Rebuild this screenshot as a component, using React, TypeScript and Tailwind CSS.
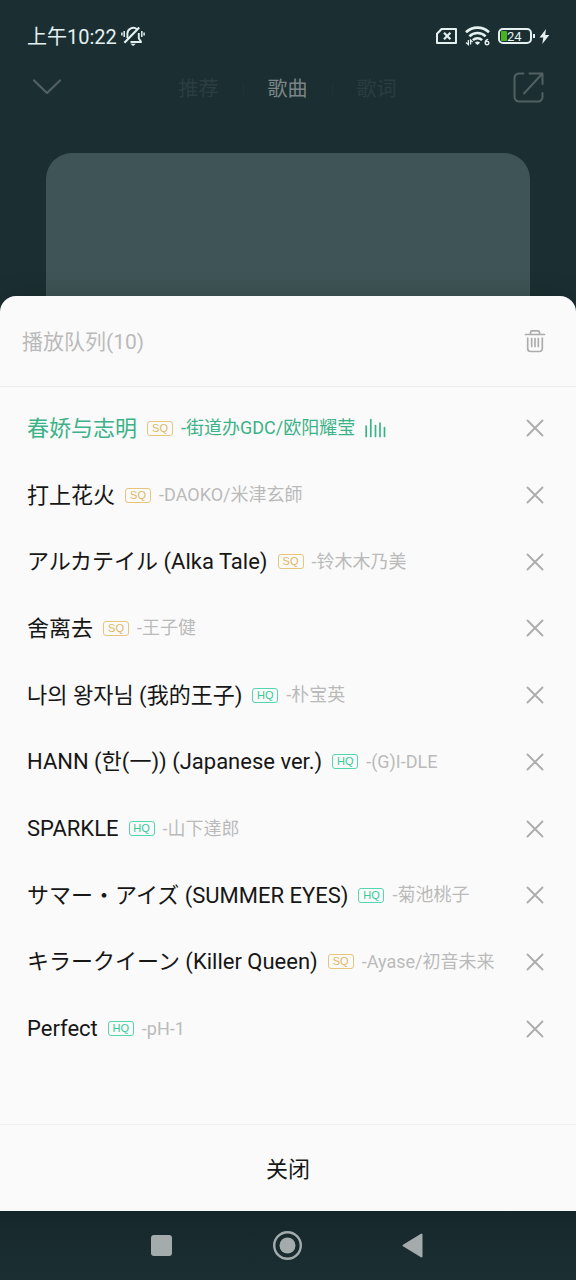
type Quality = "SQ" | "HQ";

type Track = { title: string; artist: string; quality: Quality; playing?: boolean };

const tracks: Track[] = [
  { title: "春娇与志明", artist: "街道办GDC/欧阳耀莹", quality: "SQ", playing: true },
  { title: "打上花火", artist: "DAOKO/米津玄師", quality: "SQ" },
  { title: "アルカテイル (Alka Tale)", artist: "铃木木乃美", quality: "SQ" },
  { title: "舍离去", artist: "王子健", quality: "SQ" },
  { title: "나의 왕자님 (我的王子)", artist: "朴宝英", quality: "HQ" },
  { title: "HANN (한(一)) (Japanese ver.)", artist: "(G)I-DLE", quality: "HQ" },
  { title: "SPARKLE", artist: "山下達郎", quality: "HQ" },
  { title: "サマー・アイズ (SUMMER EYES)", artist: "菊池桃子", quality: "HQ" },
  { title: "キラークイーン (Killer Queen)", artist: "Ayase/初音未来", quality: "SQ" },
  { title: "Perfect", artist: "pH-1", quality: "HQ" },
];

function MutedBell() {
  return (
    <svg width="24" height="22" viewBox="0 0 24 22" fill="none" stroke="currentColor" strokeWidth="1.9" aria-label="静音">
      <path d="M6.400 13V8.500a5.900 5.900 0 0 1 9.600-4.300" />
      <path d="M17.800 8v5.500l2 2.700V17H9.500" />
      <path d="M3.400 17.800 18.200 2.600" strokeWidth="2.200" />
      <path d="M9.300 18.800h5.600L12.100 21z" fill="currentColor" stroke="none" />
      <path d="M3.200 6v6M.9 7.500v3M20.800 6v6M23.100 7.500v3" strokeWidth="1.500" />
    </svg>
  );
}

function SimMissing() {
  return (
    <svg width="21" height="16" viewBox="0 0 21 16" fill="none" stroke="currentColor" aria-label="无SIM卡">
      <path d="M5.600 1H20v14H1V5.800z" strokeWidth="2" strokeLinejoin="round" />
      <path d="m8 4.800 6.400 6.400m0-6.400L8 11.200" strokeWidth="2.200" />
    </svg>
  );
}

function Wifi() {
  return (
    <svg width="25" height="20" viewBox="0 0 25 20" fill="none" stroke="currentColor" aria-label="Wi-Fi 6">
      <path d="M1 6.300a16.500 16.500 0 0 1 23 0" strokeWidth="2.600" />
      <path d="M4.400 10.400a11.500 11.500 0 0 1 16.200 0" strokeWidth="2.600" />
      <path d="M7.900 14.200a6.500 6.500 0 0 1 9.200 0" strokeWidth="2.600" />
      <path d="m9.800 16.700 2.700 2.300 2.700-2.300a4 4 0 0 0-5.400 0z" fill="currentColor" stroke="none" />
      <path d="M3.400 14v4.500L1 16.400M5.600 18.500V14l2 2.100" strokeWidth="1.300" />
      <path d="M23.200 13.400c-2 .3-3 1.600-3 3.300 0 1.300.7 2 1.900 2s1.800-.7 1.800-1.700-.7-1.600-1.700-1.600-1.600.5-1.900 1.100" strokeWidth="1.400" />
    </svg>
  );
}

function Battery() {
  return (
    <div className="flex items-center" role="img" aria-label="电量 24%">
      <div className="flex h-4 w-[34px] items-center rounded-[5px] border-2 border-[#e4f1f0] px-px">
        <span className="h-[10px] w-1.5 shrink-0 rounded-[1px] bg-[#49b41c]" />
        <span className="pt-px text-[13px] leading-4">24</span>
      </div>
      <span className="ml-px h-1 w-0.5 bg-[#e4f1f0]" />
      <svg className="ml-1" width="11" height="15" viewBox="0 0 11 15" fill="currentColor" aria-hidden="true">
        <path d="M7 0 .5 8.500h3.800L3.300 15l7-9H6.200z" />
      </svg>
    </div>
  );
}

function QualityBadge({ quality }: { quality: Quality }) {
  const tone = quality === "SQ" ? "border-[#e6c57c] text-[#e0b85f]" : "border-[#54d6ae] text-[#34ca9b]";
  return (
    <span
      className={`mr-2 ml-[10px] flex h-[15px] w-[26px] shrink-0 items-center justify-center rounded-[3px] border font-['Liberation_Sans',sans-serif] text-[11px] leading-none ${tone}`}
    >
      {quality}
    </span>
  );
}

function PlayingBars() {
  return (
    <svg className="ml-[10px] shrink-0" width="21" height="20" viewBox="0 0 21 20" stroke="currentColor" strokeWidth="1.700" strokeLinecap="round" aria-label="正在播放">
      <path d="M1.200 8v10.500M5.800 1.500v17M10.500 7.500v11M15 5v13.500M19.500 9.500v9" />
    </svg>
  );
}

function TrackRow({ track }: { track: Track }) {
  return (
    <li className="flex items-center justify-between pr-[31px] pl-[27px]">
      <div className={`flex min-w-0 items-center whitespace-nowrap ${track.playing ? "text-[#3cb288]" : "text-[#161616]"}`}>
        <span className="pt-px text-[22px] leading-8">{track.title}</span>
        <QualityBadge quality={track.quality} />
        <span className={`text-[18px] leading-6 ${track.playing ? "" : "text-[#bababa]"}`}>-{track.artist}</span>
        {track.playing && <PlayingBars />}
      </div>
      <button type="button" aria-label={`移除 ${track.title}`} className="shrink-0 text-[#adadad]">
        <svg width="20" height="20" viewBox="0 0 20 20" stroke="currentColor" strokeWidth="1.900" strokeLinecap="round">
          <path d="m2.500 2.500 15 15m0-15-15 15" />
        </svg>
      </button>
    </li>
  );
}

export default function App() {
  return (
    <div className="flex min-h-screen flex-col bg-[#1b2f32] font-[Roboto,'Noto_Sans_CJK_SC',sans-serif]">
      <div className="flex h-[72px] items-center justify-between pr-[26px] pl-[27px] text-[#e4f1f0]">
        <div className="flex items-center gap-1">
          <span className="pt-0.5 text-[20px] leading-7">上午10:22</span>
          <MutedBell />
        </div>
        <div className="flex items-center gap-2">
          <SimMissing />
          <Wifi />
          <Battery />
        </div>
      </div>

      <nav className="flex h-[30px] items-center justify-between px-8 text-[#526063]">
        <button type="button" aria-label="收起">
          <svg width="30" height="18" viewBox="0 0 30 18" fill="none" stroke="currentColor" strokeWidth="2.200" strokeLinecap="round" strokeLinejoin="round">
            <path d="m2 2.500 13 12.500L28 2.500" />
          </svg>
        </button>
        <div className="flex items-center gap-6 pt-1 text-[20px] leading-7 text-[#2b3d41]">
          <button type="button">推荐</button>
          <span className="h-3 w-px bg-[#203438]" />
          <button type="button" className="text-[#7b8586]">歌曲</button>
          <span className="h-3 w-px bg-[#203438]" />
          <button type="button">歌词</button>
        </div>
        <button type="button" aria-label="分享">
          <svg width="31" height="31" viewBox="0 0 31 31" fill="none" stroke="currentColor" strokeWidth="2" strokeLinecap="round" strokeLinejoin="round">
            <path d="M10.500 1.500H6A4.500 4.500 0 0 0 1.500 6v19A4.500 4.500 0 0 0 6 29.500h19a4.500 4.500 0 0 0 4.500-4.500v-4" />
            <path d="M16.500 1.500h13v10.500M29 2 11 21.500" />
          </svg>
        </button>
      </nav>

      <div className="mx-[46px] mt-[51px] h-[143px] rounded-t-[26px] bg-[#3e5456]" />

      <section aria-label="播放队列" className="flex flex-1 flex-col rounded-t-2xl bg-[#fafafa] shadow-[0_0_24px_rgba(0,0,0,0.200)]">
        <header className="flex h-[91px] items-center justify-between border-b border-[#ededed] pr-[30px] pl-[22px]">
          <h1 className="pt-0.5 text-[21px] leading-8 text-[#bababa]">播放队列(10)</h1>
          <button type="button" aria-label="清空播放队列" className="text-[#adadad]">
            <svg width="22" height="24" viewBox="0 0 22 24" fill="none" stroke="currentColor" strokeWidth="1.700" strokeLinecap="round" strokeLinejoin="round">
              <path d="M1.500 5.500h19M6.500 5.200V3.300a1.500 1.500 0 0 1 1.500-1.500h6a1.500 1.500 0 0 1 1.500 1.500v1.900" />
              <path d="M3.700 9v10.500a3 3 0 0 0 3 3h8.600a3 3 0 0 0 3-3V9M7.700 9.500v8M11 9.500v8M14.300 9.500v8" />
            </svg>
          </button>
        </header>
        <ul className="mt-2 grid min-h-[667px] auto-rows-fr">
          {tracks.map((track) => (
            <TrackRow key={track.title} track={track} />
          ))}
        </ul>
        <button type="button" className="mt-auto h-[87px] border-t border-[#efefef] pt-1 text-[22px] leading-8 text-[#161616]">
          关闭
        </button>
      </section>

      <nav aria-label="系统导航" className="z-10 flex h-[69px] items-center justify-center gap-[97px] bg-linear-to-b from-[#16272b] to-[#1b2f32] pr-0.5 text-[#a3abac]">
        <button type="button" aria-label="最近任务">
          <svg width="29" height="29" viewBox="0 0 29 29" fill="currentColor">
            <rect x="4" y="4" width="21" height="21" rx="3" />
          </svg>
        </button>
        <button type="button" aria-label="主屏幕">
          <svg width="29" height="29" viewBox="0 0 29 29" fill="currentColor">
            <circle cx="14.500" cy="14.500" r="13.300" fill="none" stroke="currentColor" strokeWidth="2.400" />
            <circle cx="14.500" cy="14.500" r="8" />
          </svg>
        </button>
        <button type="button" aria-label="返回">
          <svg width="29" height="29" viewBox="0 0 29 29" fill="currentColor" stroke="currentColor" strokeWidth="2" strokeLinejoin="round">
            <path d="M22.500 3.500v22L4.500 14.500z" />
          </svg>
        </button>
      </nav>
    </div>
  );
}
